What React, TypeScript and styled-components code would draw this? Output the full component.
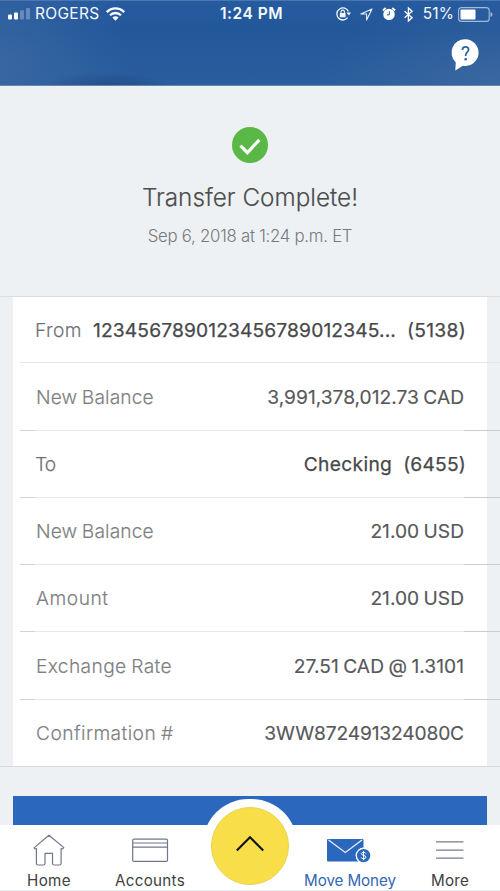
import React from "react";
import styled, { createGlobalStyle } from "styled-components";

const GlobalStyle = createGlobalStyle`
  * { box-sizing: border-box; }
  body { margin: 0; background: #edf1f3; }
`;

const Screen = styled.div`
  width: 500px;
  height: 891px;
  display: flex;
  flex-direction: column;
  overflow: hidden;
  background: #edf1f3;
  font-family: Inter, "Liberation Sans", sans-serif;
`;

const Header = styled.header`
  flex: none;
  height: 86px;
  border-top: 1px solid #4a77ae;
  border-bottom: 1px solid #6288b6;
  background:
    radial-gradient(ellipse 66px 15px at 107px 86px, rgba(26, 62, 112, 0.5), rgba(26, 62, 112, 0)),
    radial-gradient(ellipse 130px 110px at 0 60px, rgba(62, 106, 164, 0.75), rgba(62, 106, 164, 0)),
    radial-gradient(ellipse 180px 90px at 500px 85px, rgba(66, 107, 160, 0.7), rgba(66, 107, 160, 0)),
    linear-gradient(180deg, #265b9f 0%, #22579a 35%, #2a5e9e 100%);
  color: #f5f9fd;
`;

const StatusBar = styled.div`
  height: 26px;
  display: grid;
  grid-template-columns: 1fr auto 1fr;
  align-items: center;
  padding: 0 7px 0 8px;
`;

const StatusGroup = styled.div<{ $end?: boolean }>`
  display: flex;
  align-items: center;
  justify-content: ${(p) => (p.$end ? "flex-end" : "flex-start")};
`;

const StatusText = styled.span<{ $weight?: number; $tracking: number }>`
  font-size: 15.5px;
  line-height: 20px;
  font-weight: ${(p) => p.$weight ?? 400};
  letter-spacing: ${(p) => p.$tracking}px;
  white-space: nowrap;
`;

const Carrier = styled(StatusText)`
  margin: 0 7px 0 5px;
`;

const Clock = styled(StatusText)`
  margin-left: 2px;
`;

const Percent = styled(StatusText)`
  margin: 0 4px 0 10px;
`;

const StatusIcons = styled.div`
  display: flex;
  align-items: center;
  gap: 9px;
`;

const HelpRow = styled.div`
  display: flex;
  justify-content: flex-end;
  padding: 11px 21px 0 0;
`;

const Glyph = styled.svg`
  display: block;
  flex: none;
  overflow: visible;
`;

const Content = styled.main`
  flex: 1;
  min-height: 0;
  overflow: hidden;
`;

const Hero = styled.section`
  height: 211px;
  display: flex;
  flex-direction: column;
  align-items: center;
  padding-top: 41px;
  border-bottom: 1px solid #dbdde0;
`;

const Title = styled.h1`
  margin: 18px 0 0;
  font-size: 24.3px;
  line-height: 32px;
  font-weight: 300;
  color: #4c4d4e;
  -webkit-text-stroke: 0.15px #4c4d4e;
`;

const Timestamp = styled.p`
  margin: 10px 0 0;
  font-size: 16.8px;
  line-height: 26px;
  font-weight: 300;
  letter-spacing: -0.26px;
  color: #77797b;
`;

const Details = styled.dl`
  position: relative;
  margin: 0 13px;
  background: #fff;
`;

const Row = styled.div<{ $height: number; $account?: boolean }>`
  position: relative;
  height: ${(p) => p.$height}px;
  display: flex;
  align-items: flex-start;
  justify-content: space-between;
  padding: ${(p) => (p.$height - 27) / 2}px ${(p) => (p.$account ? 21 : 23)}px 0 ${(p) => (p.$account ? 22 : 23)}px;

  &::after {
    content: "";
    position: absolute;
    left: 7px;
    right: -13px;
    bottom: 0;
    height: 1px;
    background: linear-gradient(90deg, #d2d3d5 15px, #e7e8eb 15px, #e7e8eb 444px, #cbccd0 444px);
  }

  &:first-child::after {
    background: #e4e6e9;
  }

  &:last-child::after {
    left: -13px;
    background: #d8dade;
  }
`;

const Label = styled.dt<{ $tracking: number; $strong?: boolean }>`
  font-size: 19.2px;
  line-height: 26px;
  font-weight: 300;
  letter-spacing: ${(p) => p.$tracking}px;
  word-spacing: -1px;
  color: ${(p) => (p.$strong ? "#707274" : "#7e8082")};
  -webkit-text-stroke: 0.15px;
  white-space: nowrap;
`;

const Value = styled.dd<{ $tracking: number; $strong?: boolean }>`
  margin: 0;
  font-size: 19.2px;
  line-height: 26px;
  font-weight: 400;
  letter-spacing: ${(p) => p.$tracking}px;
  word-spacing: -1px;
  color: ${(p) => (p.$strong ? "#474849" : "#57585a")};
  -webkit-text-stroke: ${(p) => (p.$strong ? 0.25 : 0.15)}px;
  white-space: nowrap;
`;

const AccountSuffix = styled.span<{ $tracking: number }>`
  margin-left: 11px;
  letter-spacing: ${(p) => p.$tracking}px;
`;

const PrimaryButton = styled.button`
  display: block;
  width: 474px;
  height: 56px;
  margin: 29px 13px 0;
  border: 0;
  background: #2b68bd;
`;

const TabBar = styled.nav`
  position: relative;
  flex: none;
  height: 66px;
  display: grid;
  grid-template-columns: 98px 104px 96px 104px 96px;
  background: #fff;
  border-bottom: 1px solid #e9eeef;
`;

const Tab = styled.div<{ $active?: boolean }>`
  display: flex;
  flex-direction: column;
  align-items: center;
  color: ${(p) => (p.$active ? "#3267b1" : "#3e3f41")};
`;

const TabIcon = styled.div`
  height: 45px;
  display: flex;
  align-items: flex-start;
  padding-top: 9px;
`;

const TabLabel = styled.span<{ $tracking: number }>`
  font-size: 15.2px;
  line-height: 21px;
  letter-spacing: ${(p) => p.$tracking}px;
  white-space: nowrap;
`;

const Bulge = styled.div`
  position: absolute;
  left: 203px;
  top: -26px;
  width: 94px;
  height: 91px;
  display: flex;
  justify-content: center;
  padding-top: 8px;
  border-radius: 47px;
  background: #fff;
`;

const ActionButton = styled.button`
  width: 78px;
  height: 78px;
  padding: 0 0 4px;
  display: flex;
  align-items: center;
  justify-content: center;
  border: 1px solid #e8d34b;
  border-radius: 50%;
  background: #f8df49;
`;

const SignalIcon = () => (
  <Glyph width="22" height="12" viewBox="0 0 22 12" fill="#fff">
    <rect x="0" y="6.5" width="4" height="5" rx="1" />
    <rect x="6" y="4.5" width="4" height="7" rx="1" />
    <rect x="12" y="2.3" width="4" height="9.2" rx="1" opacity=".28" />
    <rect x="18" y="0" width="4" height="11.5" rx="1" opacity=".28" />
  </Glyph>
);

const WifiIcon = () => (
  <Glyph width="19" height="14" viewBox="0 0 19 14" fill="none" stroke="#fff" strokeWidth="2.3">
    <path d="M.8 5.1C5.6.1 13.4.1 18.2 5.1" />
    <path d="M4 8.3c3-3.1 8-3.1 11 0" />
    <path d="M9.5 13.8 6.4 10.6c1.8-1.7 4.4-1.7 6.2 0z" fill="#fff" stroke="none" />
  </Glyph>
);

const RotationLockIcon = () => (
  <Glyph width="14" height="14" viewBox="0 0 14 14" fill="none" stroke="#f5f9fd">
    <path d="M12.4 4.6A6 6 0 1 0 11.6 10.7" strokeWidth="1.3" />
    <path d="M10.4 5.6h4.6L12.9 8.6z" fill="#f5f9fd" stroke="none" />
    <rect x="3.8" y="6" width="5.8" height="4.3" rx=".5" fill="#f5f9fd" stroke="none" />
    <path d="M5 6V4.8a1.7 1.7 0 0 1 3.4 0V6" strokeWidth="1.1" />
  </Glyph>
);

const LocationIcon = () => (
  <Glyph width="14" height="13" viewBox="-1 0 14 13" fill="none" stroke="#e9f1fa" strokeWidth="1.1" strokeLinejoin="round">
    <path d="M12 1 .9 6h5.7v5.9z" />
  </Glyph>
);

const AlarmIcon = () => (
  <Glyph width="13" height="14" viewBox="-.5 0 13 14" fill="none">
    <circle cx="6.5" cy="7.4" r="5.7" fill="#fff" />
    <path d="M.4 3.5 3.2 1M12.6 3.5 9.8 1" stroke="#fff" strokeWidth="1.8" />
    <path d="M6.8 4.2v3.7H4.3" stroke="#2a5e9e" strokeWidth="1" />
  </Glyph>
);

const BluetoothIcon = () => (
  <Glyph width="9" height="15" viewBox="0 0 9 15" fill="none" stroke="#fff" strokeWidth="1.3">
    <path d="m.6 4.2 7.5 6.5-3.7 3.3V1l3.7 3.3L.6 10.8" />
  </Glyph>
);

const BatteryIcon = () => (
  <Glyph width="35" height="15" viewBox="0 0 35 15">
    <rect x=".6" y=".6" width="30.6" height="13.8" rx="3" fill="none" stroke="#a2bbd8" strokeWidth="1.1" />
    <rect x="2.5" y="2.5" width="15" height="10" rx="1" fill="#fff" />
    <path d="M32.5 5v5q2-.6 2-2.5t-2-2.5" fill="#9eb8d6" />
  </Glyph>
);

const HelpIcon = () => (
  <Glyph width="28" height="33" viewBox="0 0 28 33">
    <path d="M14.5 1.2a13.4 13.4 0 1 1-2.6 26.6L4.3 32.6l.5-8.2A13.4 13.4 0 0 1 14.5 1.2z" fill="#fff" />
    <path d="M11.4 12q0-3.1 3.1-3.1t3.1 2.7c0 2.5-2.9 2.5-2.9 5.5v.9" fill="none" stroke="#2e629f" strokeWidth="1.7" />
    <circle cx="14.7" cy="21.3" r="1.3" fill="#2e629f" />
  </Glyph>
);

const SuccessIcon = () => (
  <Glyph width="36" height="36" viewBox="0 0 36 36">
    <circle cx="18" cy="18" r="18" fill="#5ab846" />
    <path d="m8.5 18.6 6.9 7L27.3 12.8" fill="none" stroke="#fff" strokeWidth="3.2" />
  </Glyph>
);

const HomeIcon = () => (
  <Glyph width="32" height="33" viewBox="0 0 32 33" fill="none" stroke="#71778a" strokeWidth="1.2" strokeLinejoin="round">
    <path d="M16 1.2 1.2 13.6q.4 1.8 2.2 1v14.6q0 1.8 1.8 1.8h5q1.8 0 1.8-1.8v-9.8h7.5v9.8q0 1.8 1.8 1.8h5q1.8 0 1.8-1.8V14.6q1.8.8 2.7-1z" />
  </Glyph>
);

const CardIcon = () => (
  <Glyph width="36" height="30" viewBox="0 0 36 30" fill="none" stroke="#71778a" strokeWidth="1.2">
    <rect x=".7" y="5.2" width="34.8" height="22.2" rx="1.2" />
    <path d="M.7 9h34.8M.7 13.1h34.8" />
  </Glyph>
);

const MoveMoneyIcon = () => (
  <Glyph width="46" height="30" viewBox="0 0 46 30">
    <rect x="0" y="5" width="36.5" height="22.5" rx="1" fill="#2b68bd" />
    <path d="m1.5 6 16.8 12.4L35 6" fill="none" stroke="#e7effa" strokeWidth="1.3" />
    <circle cx="36.6" cy="21.6" r="8" fill="#fff" />
    <circle cx="36.6" cy="21.6" r="6.7" fill="#2b68bd" />
    <path d="M39 19.6q-.4-1.3-2.4-1.3t-2.2 1.5c0 2 4.6 1.2 4.6 3.4q-.2 1.6-2.4 1.6t-2.5-1.5M36.6 17v9.2" fill="none" stroke="#fff" strokeWidth="1" />
  </Glyph>
);

const MenuIcon = () => (
  <Glyph width="28" height="30" viewBox="0 0 28 30">
    <path d="M0 7.9h27.5M0 16.1h27.5M0 24.1h27.5" stroke="#777d8d" strokeWidth="1.3" />
  </Glyph>
);

const ChevronUpIcon = () => (
  <Glyph width="28" height="16" viewBox="0 0 28 16">
    <path d="M.8 14.5 14 1.2l13.2 13.3" fill="none" stroke="#111" strokeWidth="2.1" />
  </Glyph>
);

type Detail = {
  label: string;
  value: string;
  suffix?: string;
  height: number;
  labelTracking: number;
  valueTracking: number;
  suffixTracking?: number;
};

const details: Detail[] = [
  { label: "From", value: "1234567890123456789012345...", suffix: "(5138)", height: 66, labelTracking: 0.4, valueTracking: 0.14, suffixTracking: 0.3 },
  { label: "New Balance", value: "3,991,378,012.73 CAD", height: 68, labelTracking: 0.12, valueTracking: 0 },
  { label: "To", value: "Checking", suffix: "(6455)", height: 67, labelTracking: -0.9, valueTracking: 0.34, suffixTracking: 0.2 },
  { label: "New Balance", value: "21.00 USD", height: 67, labelTracking: 0.12, valueTracking: 0 },
  { label: "Amount", value: "21.00 USD", height: 67, labelTracking: 0.55, valueTracking: 0 },
  { label: "Exchange Rate", value: "27.51 CAD @ 1.3101", height: 68, labelTracking: 0.35, valueTracking: 0.03 },
  { label: "Confirmation #", value: "3WW872491324080C", height: 67, labelTracking: 0.43, valueTracking: -0.15 },
];

export default function App() {
  return (
    <>
      <GlobalStyle />
      <Screen>
        <Header>
          <StatusBar>
            <StatusGroup>
              <SignalIcon />
              <Carrier $tracking={0.3}>ROGERS</Carrier>
              <WifiIcon />
            </StatusGroup>
            <Clock $weight={600} $tracking={0.5}>1:24 PM</Clock>
            <StatusGroup $end>
              <StatusIcons>
                <RotationLockIcon />
                <LocationIcon />
                <AlarmIcon />
                <BluetoothIcon />
              </StatusIcons>
              <Percent $tracking={0.1}>51%</Percent>
              <BatteryIcon />
            </StatusGroup>
          </StatusBar>
          <HelpRow>
            <HelpIcon />
          </HelpRow>
        </Header>
        <Content>
          <Hero>
            <SuccessIcon />
            <Title>Transfer Complete!</Title>
            <Timestamp>Sep 6, 2018 at 1:24 p.m. ET</Timestamp>
          </Hero>
          <Details>
            {details.map((d, i) => (
              <Row key={i} $height={d.height} $account={!!d.suffix}>
                <Label $tracking={d.labelTracking} $strong={!!d.suffix}>{d.label}</Label>
                <Value $tracking={d.valueTracking} $strong={!!d.suffix}>
                  {d.value}
                  {d.suffix && <AccountSuffix $tracking={d.suffixTracking ?? 0}>{d.suffix}</AccountSuffix>}
                </Value>
              </Row>
            ))}
          </Details>
          <PrimaryButton />
        </Content>
        <TabBar>
          <Tab>
            <TabIcon><HomeIcon /></TabIcon>
            <TabLabel $tracking={0.35}>Home</TabLabel>
          </Tab>
          <Tab>
            <TabIcon><CardIcon /></TabIcon>
            <TabLabel $tracking={0.3}>Accounts</TabLabel>
          </Tab>
          <span />
          <Tab $active>
            <TabIcon><MoveMoneyIcon /></TabIcon>
            <TabLabel $tracking={-0.1}>Move Money</TabLabel>
          </Tab>
          <Tab>
            <TabIcon><MenuIcon /></TabIcon>
            <TabLabel $tracking={0.25}>More</TabLabel>
          </Tab>
          <Bulge>
            <ActionButton>
              <ChevronUpIcon />
            </ActionButton>
          </Bulge>
        </TabBar>
      </Screen>
    </>
  );
}
